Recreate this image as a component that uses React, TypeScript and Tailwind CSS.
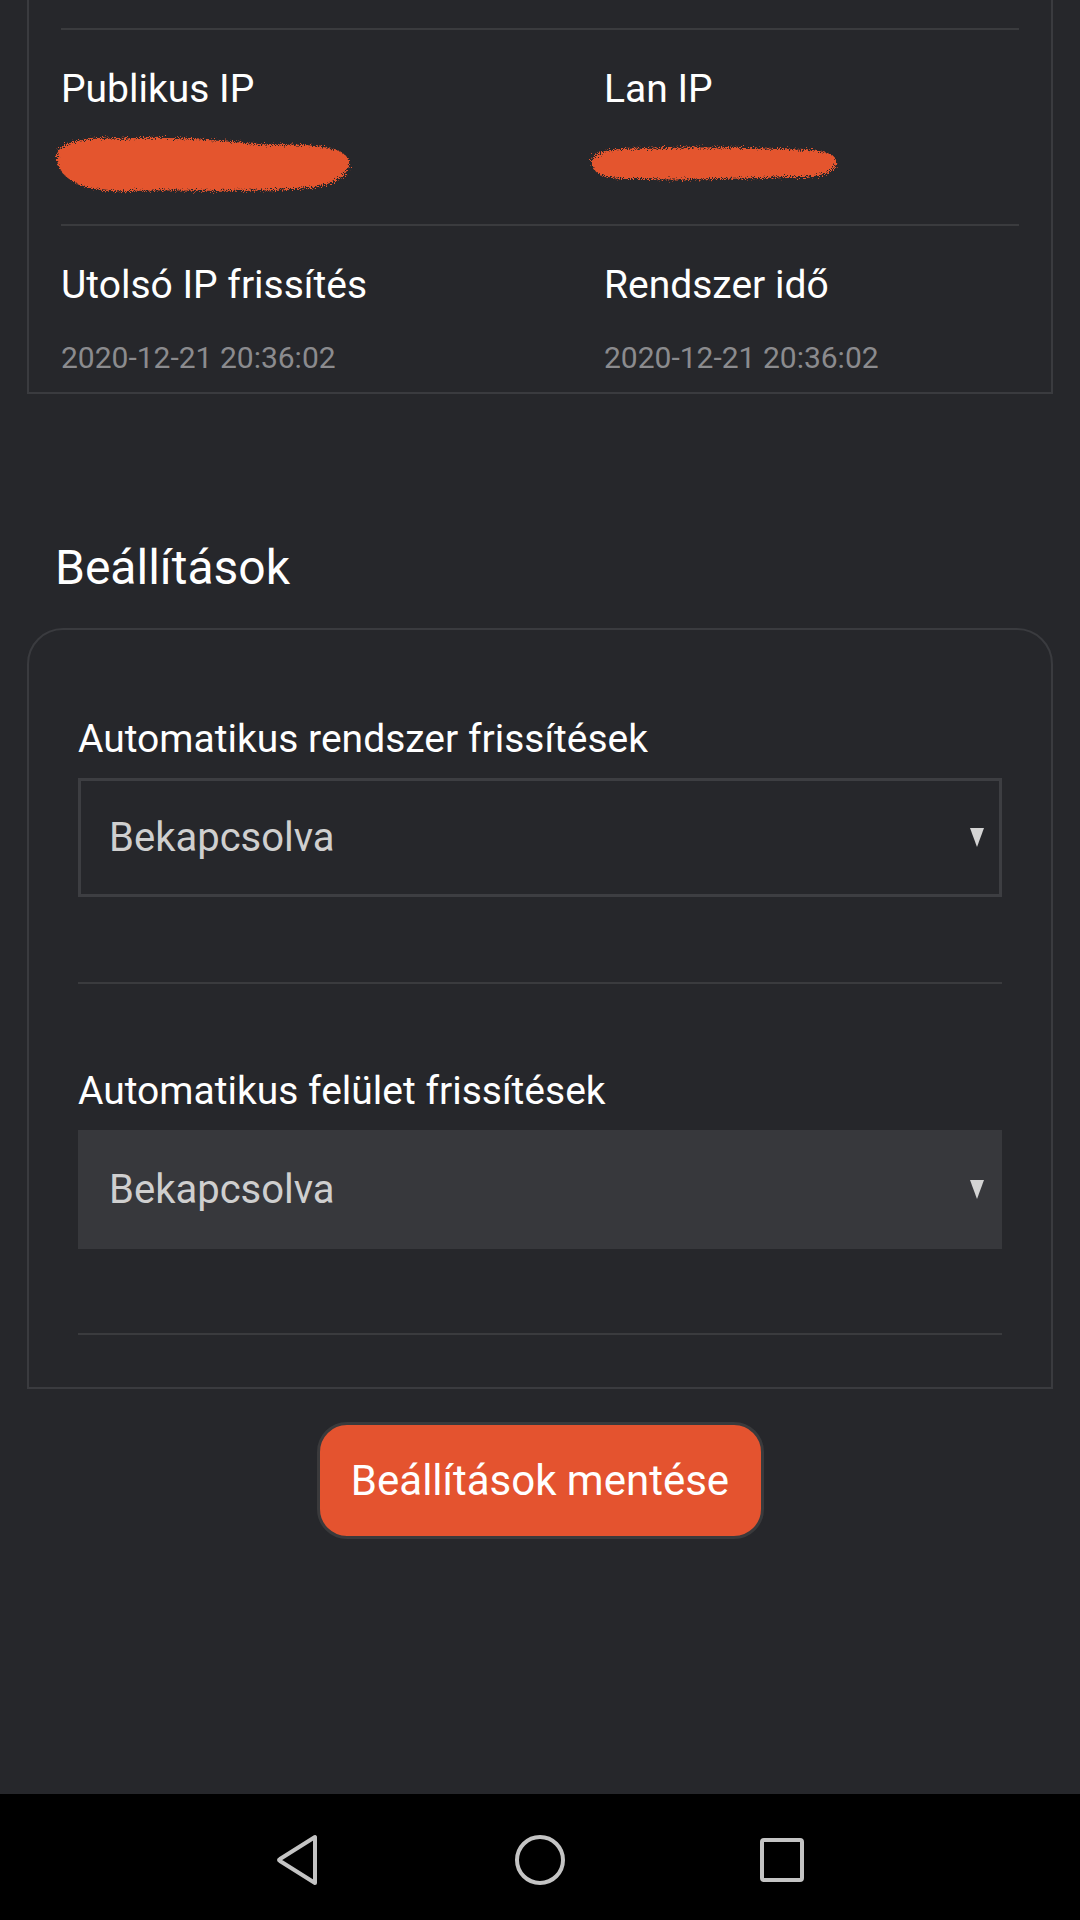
import React from "react";

const font = { fontFamily: "Roboto, 'Noto Sans', sans-serif" };

function Scribble({ w, h, d }: { w: number; h: number; d: string }) {
  return (
    <svg width={w} height={h} viewBox={`0 0 ${w} ${h}`} className="block">
      <defs>
        <filter id={`grain-${w}`} x="-10%" y="-20%" width="120%" height="140%">
          <feTurbulence type="fractalNoise" baseFrequency="0.9" numOctaves="2" seed="3" />
          <feDisplacementMap in="SourceGraphic" scale="10" />
        </filter>
      </defs>
      <path d={d} fill="#e4552f" filter={`url(#grain-${w})`} />
    </svg>
  );
}

function Arrow() {
  return (
    <svg width="16" height="21" viewBox="0 0 16 21" className="shrink-0">
      <polygon points="1,1 15,1 8,20" fill="#d4d4d4" />
    </svg>
  );
}

function Select({ filled }: { filled?: boolean }) {
  return (
    <div
      className={
        filled
          ? "mt-[17px] h-[119px] bg-[#37383c] flex items-center justify-between pl-[31px] pr-[17px]"
          : "mt-[17px] h-[119px] border-[3px] border-[#3d3e42] flex items-center justify-between pl-[28px] pr-[14px]"
      }
    >
      <span className="text-[40px] leading-[48px] text-[#cfcfcf]">Bekapcsolva</span>
      <Arrow />
    </div>
  );
}

export default function App() {
  return (
    <div style={font} className="h-[1920px] bg-[#26272b] flex flex-col text-white overflow-hidden">
      {/* info card, top cut off */}
      <div className="mx-[27px] border-x-2 border-b-2 border-[#3a3b3f] px-[32px] pb-[16px]">
        <div className="h-[28px]" />
        <div className="border-t-2 border-[#3a3b3e]" />
        <div className="grid grid-cols-[543px_1fr] pt-[37px] pb-[29px]">
          <div>
            <div className="text-[39px] leading-[44px]">Publikus IP</div>
            <div className="mt-[22px] -ml-[12px]">
              <Scribble
                w={304}
                h={62}
                d="M8,22 C10,8 40,4 70,6 C120,2 170,8 220,12 C260,10 298,14 300,28 C302,44 280,56 240,56 C190,60 130,56 80,58 C40,60 6,48 8,22 Z"
              />
            </div>
          </div>
          <div>
            <div className="text-[39px] leading-[44px]">Lan IP</div>
            <div className="mt-[31px] -ml-[18px]">
              <Scribble
                w={256}
                h={42}
                d="M6,20 C6,8 30,6 60,7 C110,4 170,6 220,8 C244,9 252,14 250,22 C248,32 230,36 200,35 C150,37 90,38 40,37 C14,36 6,30 6,20 Z"
              />
            </div>
          </div>
        </div>
        <div className="border-t-2 border-[#3a3b3e]" />
        <div className="grid grid-cols-[543px_1fr] pt-[37px]">
          <div>
            <div className="text-[39px] leading-[44px]">Utolsó IP frissítés</div>
            <div className="mt-[33px] text-[30px] leading-[36px] text-[#8b8b8e]">2020-12-21 20:36:02</div>
          </div>
          <div>
            <div className="text-[39px] leading-[44px]">Rendszer idő</div>
            <div className="mt-[33px] text-[30px] leading-[36px] text-[#8b8b8e]">2020-12-21 20:36:02</div>
          </div>
        </div>
      </div>

      <h2 className="mt-[146px] ml-[55px] text-[48px] leading-[56px] font-normal">Beállítások</h2>

      {/* settings card */}
      <div className="mt-[32px] mx-[27px] border-2 border-[#3a3b3f] rounded-t-[36px] px-[49px] pt-[87px] pb-[52px]">
        <div className="text-[39px] leading-[44px]">Automatikus rendszer frissítések</div>
        <Select />
        <div className="mt-[85px] border-t-2 border-[#3a3b3e]" />
        <div className="mt-[85px] text-[39px] leading-[44px]">Automatikus felület frissítések</div>
        <Select filled />
        <div className="mt-[84px] border-t-2 border-[#3a3b3e]" />
      </div>

      <div className="mt-[33px] flex justify-center">
        <button className="w-[447px] h-[117px] rounded-[30px] bg-[#e4532f] border-[3px] border-[#3a3a3c] text-[42px] leading-[48px] text-white">
          Beállítások mentése
        </button>
      </div>

      {/* android nav bar */}
      <div className="mt-auto h-[126px] bg-black flex items-center justify-center gap-[193px] pt-[6px]">
        <svg width="46" height="52" viewBox="0 0 46 52" fill="none" stroke="#c4c4c4" strokeWidth="4" strokeLinejoin="round">
          <path d="M40,3 L40,49 L5,27 Q3,26 5,25 Z" />
        </svg>
        <svg width="52" height="52" viewBox="0 0 52 52" fill="none" stroke="#c4c4c4" strokeWidth="4">
          <circle cx="26" cy="26" r="23" />
        </svg>
        <svg width="46" height="46" viewBox="0 0 46 46" fill="none" stroke="#c4c4c4" strokeWidth="4">
          <rect x="3" y="3" width="40" height="40" rx="2" />
        </svg>
      </div>
    </div>
  );
}
